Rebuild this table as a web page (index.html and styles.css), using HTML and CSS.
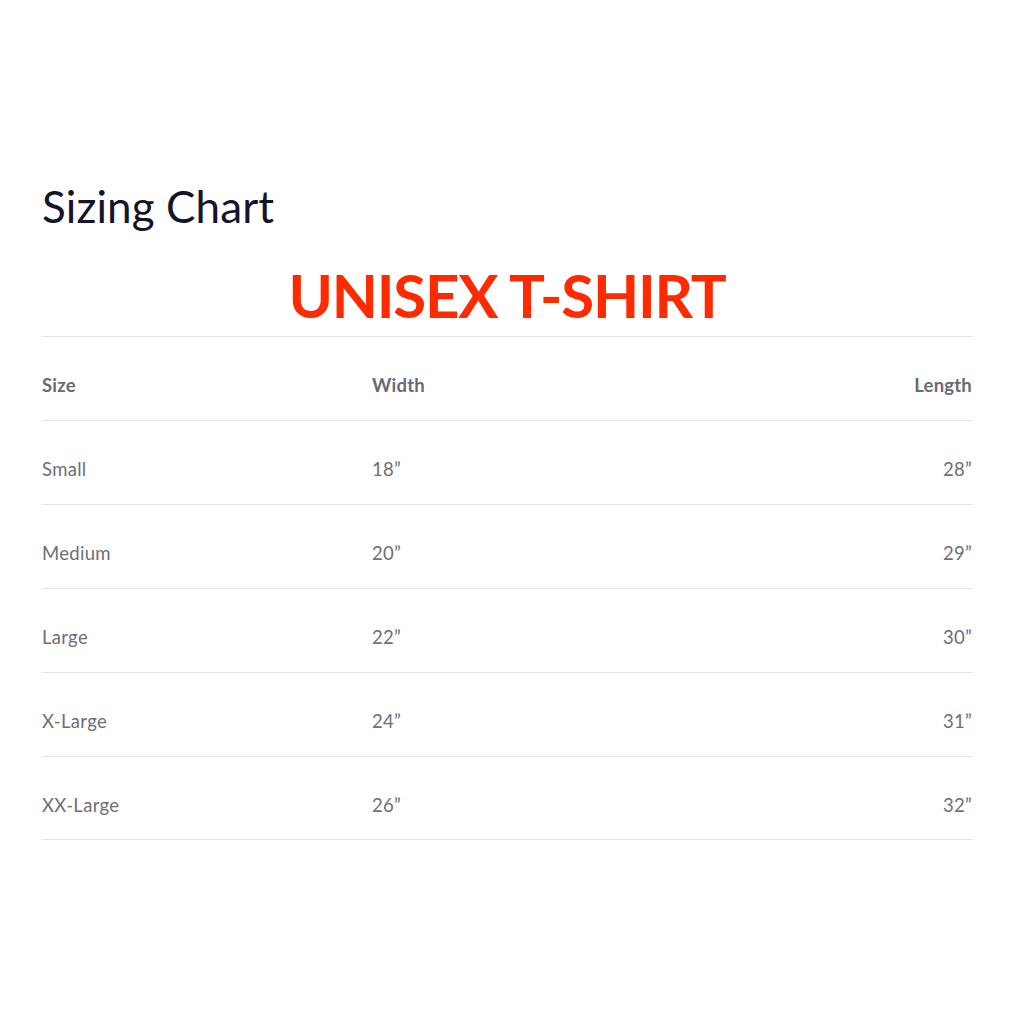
FILE: index.html
```html
<!DOCTYPE html>
<html>
<head>
<meta charset="utf-8">
<link rel="stylesheet" href="styles.css">
</head>
<body>
<div class="page">
  <h1 class="title">Sizing Chart</h1>
  <h2 class="product">UNISEX T-SHIRT</h2>
  <div class="table">
    <div class="row head"><span class="c1">Size</span><span class="c2">Width</span><span class="c3">Length</span></div>
    <div class="row"><span class="c1">Small</span><span class="c2">18”</span><span class="c3">28”</span></div>
    <div class="row"><span class="c1">Medium</span><span class="c2">20”</span><span class="c3">29”</span></div>
    <div class="row"><span class="c1">Large</span><span class="c2">22”</span><span class="c3">30”</span></div>
    <div class="row"><span class="c1">X-Large</span><span class="c2">24”</span><span class="c3">31”</span></div>
    <div class="row"><span class="c1">XX-Large</span><span class="c2">26”</span><span class="c3">32”</span></div>
  </div>
</div>
</body>
</html>
```
FILE: styles.css
```css
html, body { margin: 0; padding: 0; background: #fff; }
body { font-family: Lato, "Open Sans", sans-serif; }
.page { width: 930px; padding: 180px 0 0 42px; }
.title {
  margin: 0;
  font-weight: 400;
  font-size: 44px;
  line-height: 52px;
  color: #14142b;
  letter-spacing: 0.1px;
}
.product {
  margin: 28px 0 0;
  text-align: center;
  font-weight: 700;
  font-size: 60px;
  line-height: 70px;
  color: #ff2a00;
  padding-bottom: 6px;
  letter-spacing: -1.2px;
}
.table { border-top: 1px solid #e2e2e4; }
.row {
  display: flex;
  height: 84px;
  align-items: center;
  padding-top: 13px;
  box-sizing: border-box;
  border-bottom: 1px solid #e2e2e4;
  font-size: 18.5px;
  letter-spacing: 0.3px;
  color: #6e6e78;
}
.row:last-child { height: 83px; }
.row span { line-height: 24px; }
.head { font-weight: 700; color: #6a6a75; letter-spacing: 0.2px; }
.row .c1 { width: 330px; }
.row .c2 { flex: 1; }
.row .c3 { text-align: right; }
```
